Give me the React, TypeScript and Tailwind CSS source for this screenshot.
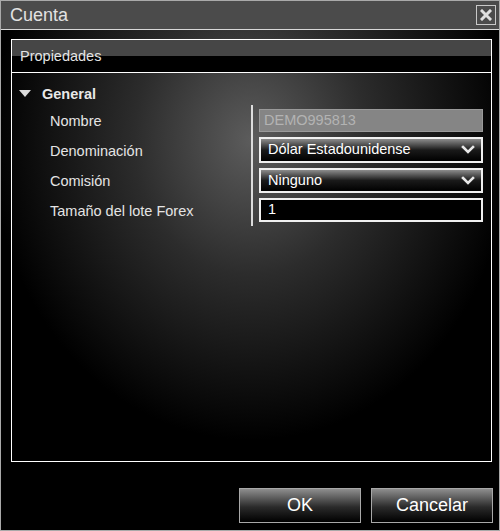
import React from "react";

const font = { fontFamily: '"Liberation Sans", Arial, sans-serif' };

function Chevron() {
  return (
    <svg width="14" height="10" viewBox="0 0 14 10" className="shrink-0">
      <path d="M2 2 L7 7 L12 2" stroke="#e8e8e8" strokeWidth="2.6" fill="none" strokeLinecap="square" />
    </svg>
  );
}

const rows = [
  { label: "Nombre", h: "h-[23px]" },
  { label: "Denominación", h: "h-[26px]" },
  { label: "Comisión", h: "h-[25px]" },
  { label: "Tamaño del lote Forex", h: "h-[24px]" },
];

export default function App() {
  return (
    <div
      style={font}
      className="w-[500px] h-[531px] flex flex-col border border-[#a9a9a9] bg-black overflow-hidden"
    >
      <div className="h-[29px] shrink-0 flex items-center justify-between bg-[#4b4b4b] border-b border-[#d8d8d8] pl-[9px] pr-[3px]">
        <span className="text-[18px] text-[#e2e2e2] leading-none">Cuenta</span>
        <div className="w-[20px] h-[20px] border border-[#c8c8c8] flex items-center justify-center">
          <svg width="12" height="12" viewBox="0 0 12 12">
            <path d="M2 2 L10 10 M10 2 L2 10" stroke="#e0e0e0" strokeWidth="3" strokeLinecap="square" />
          </svg>
        </div>
      </div>
      <div className="flex-1 flex flex-col bg-[radial-gradient(ellipse_260px_300px_at_250px_110px,#5c5c5c_0%,#2c2c2c_45%,#000_100%)] pt-[9px] pl-[10px] pr-[7px]">
        <div className="h-[423px] border border-white flex flex-col">
          <div className="h-[33px] shrink-0 border-b border-white bg-[linear-gradient(#464646_0%,#464646_50%,#000_50%,#000_100%)] flex items-center pl-[8px]">
            <span className="text-[14.5px] text-[#e4e4e4] leading-none">Propiedades</span>
          </div>
          <div className="pt-[10px]">
            <div className="h-[22px] flex items-center pl-[7px]">
              <svg width="12" height="8" viewBox="0 0 12 8" className="mr-[11px]">
                <path d="M0 0 L12 0 L6 7 Z" fill="#dcdcdc" />
              </svg>
              <span className="text-[14.5px] font-bold text-[#e8e8e8] leading-none">General</span>
            </div>
            <div className="flex">
              <div className="w-[239px] flex flex-col gap-[5px] py-[4px]">
                {rows.map((r) => (
                  <div key={r.label} className={`${r.h} flex items-center pl-[38px] pt-[2px] text-[14.5px] text-[#e4e4e4] leading-none`}>
                    {r.label}
                  </div>
                ))}
              </div>
              <div className="flex-1 flex flex-col gap-[5px] py-[4px] pl-[6px] pr-[8px] border-l-2 border-[#dcdcdc]">
                <div className="h-[23px] bg-[#858585] border border-[#9a9a9a] flex items-center pl-[4px] text-[14.5px] text-[#b3b3b3]">
                  DEMO995813
                </div>
                <div className="h-[26px] border-2 border-[#f0f0f0] bg-[linear-gradient(#8c8c8c_0%,#1a1a1a_50%,#000_100%)] flex items-center justify-between pl-[7px] pr-[6px] text-[14.5px] text-white">
                  <span>Dólar Estadounidense</span>
                  <Chevron />
                </div>
                <div className="h-[25px] border-2 border-[#f0f0f0] bg-[linear-gradient(#8c8c8c_0%,#1a1a1a_50%,#000_100%)] flex items-center justify-between pl-[7px] pr-[6px] text-[14.5px] text-white">
                  <span>Ninguno</span>
                  <Chevron />
                </div>
                <div className="h-[24px] border-2 border-[#f0f0f0] bg-black flex items-center pl-[7px] text-[14.5px] text-white">
                  1
                </div>
              </div>
            </div>
          </div>
        </div>
        <div className="flex justify-end gap-[10px] mt-[26px] mr-[-1px]">
          <button className="w-[122px] h-[35px] border border-[#a8a8a8] bg-[linear-gradient(#8e8e8e_0%,#2a2a2a_55%,#000_100%)] text-[18px] text-white">
            OK
          </button>
          <button className="w-[122px] h-[35px] border border-[#a8a8a8] bg-[linear-gradient(#8e8e8e_0%,#2a2a2a_55%,#000_100%)] text-[18px] text-white">
            Cancelar
          </button>
        </div>
      </div>
    </div>
  );
}
